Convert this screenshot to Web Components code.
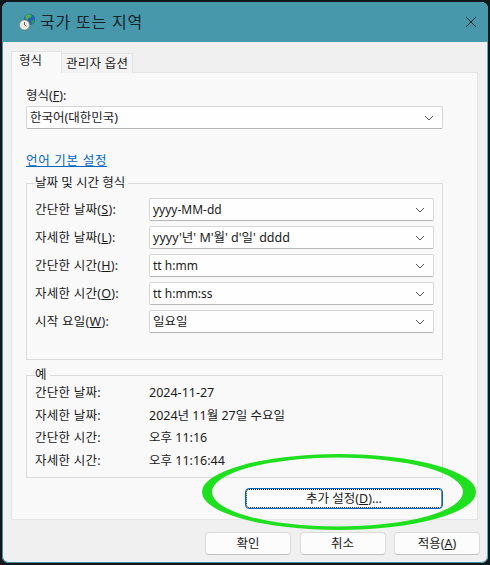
<!DOCTYPE html>
<html lang="ko">
<head>
<meta charset="utf-8">
<title>국가 또는 지역</title>
<style>
  html, body { margin: 0; height: 100%; background: #10181b; overflow: hidden; }
  body {
    font: 12.5px/16px "Noto Sans", "Noto Sans CJK KR", sans-serif;
    color: #1b1b1b;
  }
</style>
</head>
<body>
<region-dialog>
  <tab-strip></tab-strip>
  <format-panel>
    <field-label><span>형식(<u>F</u>):</span></field-label>
    <win-select>한국어(대한민국)</win-select>
    <a-link>언어 기본 설정</a-link>
    <group-box legend="날짜 및 시간 형식" pad="21">
      <form-row compact><span slot="label">간단한 날짜(<u>S</u>):</span>yyyy-MM-dd</form-row>
      <form-row><span slot="label">자세한 날짜(<u>L</u>):</span>yyyy'년' M'월' d'일' dddd</form-row>
      <form-row compact><span slot="label">간단한 시간(<u>H</u>):</span>tt h:mm</form-row>
      <form-row compact><span slot="label">자세한 시간(<u>O</u>):</span>tt h:mm:ss</form-row>
      <form-row><span slot="label">시작 요일(<u>W</u>):</span>일요일</form-row>
    </group-box>
    <group-box legend="예" pad="5" class="sample">
      <sample-row><span slot="label">간단한 날짜:</span>2024-11-27</sample-row>
      <sample-row><span slot="label">자세한 날짜:</span>2024년 11월 27일 수요일</sample-row>
      <sample-row><span slot="label">간단한 시간:</span>오후 11:16</sample-row>
      <sample-row><span slot="label">자세한 시간:</span>오후 11:16:44</sample-row>
    </group-box>
    <win-button focused wide>추가 설정(<u>D</u>)...</win-button>
  </format-panel>
  <win-button slot="footer">확인</win-button>
  <win-button slot="footer">취소</win-button>
  <win-button slot="footer">적용(<u>A</u>)</win-button>
</region-dialog>

<script>
class RegionDialog extends HTMLElement {
  constructor() {
    super();
    this.attachShadow({ mode: "open" }).innerHTML = `
      <style>
        :host {
          display: flex;
          flex-direction: column;
          position: relative;
          box-sizing: border-box;
          width: 486px;
          height: 561px;
          margin: 2px 0 0 2px;
          background: #f0f0f0;
          border-radius: 7px;
          overflow: hidden;
          box-shadow: inset -1px 0 0 #5fb0c4, inset 1px 0 0 #3f8ea3, inset 0 -1px 0 #3f8ea3;
        }
        .title {
          flex: none;
          height: 40px;
          display: flex;
          align-items: center;
          gap: 4px;
          padding: 0 11px 0 17px;
          background: #4798ab;
          font-size: 16px;
          color: #14252b;
        }
        .title span { flex: 1; letter-spacing: .8px; }
        .body { flex: 1; min-height: 0; padding: 0 10px 0 9px; display: flex; flex-direction: column; }
        footer { flex: none; display: flex; justify-content: flex-end; gap: 8.5px; padding: 12px 8px 8px 0; }
        svg { display: block; }
        .mark { position: absolute; left: 198px; top: 450px; pointer-events: none; }
      </style>
      <div class="title">
        <svg width="17" height="18" viewBox="0 0 17 18">
          <circle cx="10.500" cy="6.500" r="5.800" fill="#1c67ad"/>
          <path d="M6.500 2.500c2-1.700 4.500-1.500 6-.5l-.8 2.500-2.500.5-.5 2-2.200-1.500z" fill="#4fb04a"/>
          <path d="M12 8l3.500-1.200-.8 2.800-2 1.400z" fill="#3d9a45"/>
          <circle cx="5.500" cy="12" r="5" fill="#efece2" stroke="#8d8a80" stroke-width=".7"/>
          <path d="M5.500 9v3l2 1.200" fill="none" stroke="#444" stroke-width=".8"/>
        </svg>
        <span>국가 또는 지역</span>
        <svg width="12" height="12" viewBox="0 0 12 12"><path d="M1 1l10 10M11 1L1 11" stroke="#14252b" stroke-width="1"/></svg>
      </div>
      <div class="body"><slot></slot></div>
      <footer><slot name="footer"></slot></footer>
      <svg class="mark" width="280" height="84" viewBox="200 452 280 84">
        <path fill="#1fe01f" fill-rule="evenodd" d="M202 492a137 38 0 1 0 274 0a137 38 0 1 0-274 0z M212 492a125.500 34.500 0 1 0 251 0a125.500 34.500 0 1 0-251 0z"/>
      </svg>`;
  }
}

class TabStrip extends HTMLElement {
  constructor() {
    super();
    this.attachShadow({ mode: "open" }).innerHTML = `
      <style>
        :host { display: flex; align-items: flex-end; height: 31px; margin-bottom: -1px; position: relative; z-index: 1; }
        div { box-sizing: border-box; border: 1px solid #e3e3e3; border-bottom: 0; white-space: nowrap; }
        .on { width: 51px; height: 22px; background: #f9f9f9; line-height: 17px; padding-left: 7px; position: relative; }
        .off { width: 72px; height: 20px; margin-left: -1px; background: #f3f3f3; line-height: 20px; padding-left: 4px; letter-spacing: .25px; }
      </style>
      <div class="on">형식</div><div class="off">관리자 옵션</div>`;
  }
}

class FormatPanel extends HTMLElement {
  constructor() {
    super();
    this.attachShadow({ mode: "open" }).innerHTML = `
      <style>
        :host {
          display: flex;
          flex-direction: column;
          flex: 1;
          box-sizing: border-box;
          padding: 15px 34px 0 14px;
          background: #f9f9f9;
          border: 1px solid #e5e5e5;
        }
      </style>
      <slot></slot>`;
  }
}

class FieldLabel extends HTMLElement {
  constructor() {
    super();
    this.attachShadow({ mode: "open" }).innerHTML = `
      <style>:host { display: block; height: 18px; }</style><slot></slot>`;
  }
}

class ALink extends HTMLElement {
  constructor() {
    super();
    this.attachShadow({ mode: "open" }).innerHTML = `
      <style>
        :host { display: block; margin-top: 24px; height: 16px; color: #0067c0; text-decoration: underline; letter-spacing: .7px; }
      </style><slot></slot>`;
  }
}

class WinSelect extends HTMLElement {
  constructor() {
    super();
    this.attachShadow({ mode: "open" }).innerHTML = `
      <style>
        :host {
          display: flex;
          align-items: center;
          box-sizing: border-box;
          height: 23px;
          padding: 0 3px;
          background: #fefefe;
          border: 1px solid #d6d6d6;
          border-bottom-color: #b5b5b5;
          border-radius: 2px;
        }
        span { flex: 1; white-space: nowrap; }
        svg { margin-right: 5px; }
      </style>
      <span><slot></slot></span>
      <svg width="10" height="6" viewBox="0 0 10 6"><path d="M1 1l4 4 4-4" fill="none" stroke="#555" stroke-width="1"/></svg>`;
  }
}

class GroupBox extends HTMLElement {
  constructor() {
    super();
    const pad = this.getAttribute("pad") || "8";
    this.attachShadow({ mode: "open" }).innerHTML = `
      <style>
        :host { display: block; margin-top: 6px; }
        :host(.sample) { margin-top: 7px; }
        fieldset {
          margin: 0;
          padding: 0 8px ${pad}px 8px;
          border: 1px solid #dcdcdc;
          min-width: 0;
        }
        legend { padding: 0 3px 0 0; height: 16px; line-height: 16px; margin-left: 0; }
        .rows { display: flex; flex-direction: column; padding-top: 7px; }
        :host(.sample) .rows { padding-top: 0; margin-top: -1px; }
      </style>
      <fieldset>
        <legend>${this.getAttribute("legend")}</legend>
        <div class="rows"><slot></slot></div>
      </fieldset>`;
  }
}

class FormRow extends HTMLElement {
  constructor() {
    super();
    this.attachShadow({ mode: "open" }).innerHTML = `
      <style>
        :host { display: grid; grid-template-columns: 114px 1fr; align-items: center; height: 28px; }
        :host([compact]) win-select { font-size: 12px; }
        label { margin-top: -5px; white-space: nowrap; letter-spacing: .25px; }
        win-select { margin-top: -5px; }
      </style>
      <label><slot name="label"></slot></label>
      <win-select><slot></slot></win-select>`;
  }
}

class SampleRow extends HTMLElement {
  constructor() {
    super();
    this.attachShadow({ mode: "open" }).innerHTML = `
      <style>
        :host { display: grid; grid-template-columns: 114px 1fr; align-items: center; height: 22.600px; }
        .key { letter-spacing: .25px; }
      </style>
      <span class="key"><slot name="label"></slot></span>
      <span><slot></slot></span>`;
  }
}

class WinButton extends HTMLElement {
  constructor() {
    super();
    this.attachShadow({ mode: "open" }).innerHTML = `
      <style>
        :host {
          display: flex;
          align-items: center;
          justify-content: center;
          box-sizing: border-box;
          width: 86px;
          height: 23px;
          background: #fcfcfc;
          border: 1px solid #dadada;
          border-bottom-color: #c0c0c0;
          border-radius: 4px;
        }
        :host([wide]) { width: 198px; height: 21px; margin: 10px 0 0 auto; }
        :host([focused]) { border-color: #0067c0; background: #fdfdfd; outline: 1px dotted #111; outline-offset: -2px; }
      </style>
      <slot></slot>`;
  }
}

customElements.define("region-dialog", RegionDialog);
customElements.define("tab-strip", TabStrip);
customElements.define("format-panel", FormatPanel);
customElements.define("field-label", FieldLabel);
customElements.define("a-link", ALink);
customElements.define("win-select", WinSelect);
customElements.define("group-box", GroupBox);
customElements.define("form-row", FormRow);
customElements.define("sample-row", SampleRow);
customElements.define("win-button", WinButton);
</script>
</body>
</html>
